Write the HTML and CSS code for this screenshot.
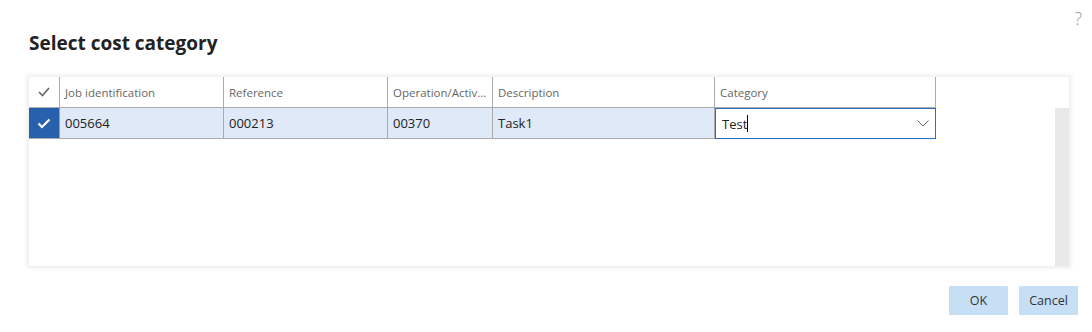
FILE: index.html
```html
<!DOCTYPE html>
<html lang="en">

<head>
    <meta charset="UTF-8">
    <title>Select cost category</title>
    <link rel="stylesheet" href="styles.css">
</head>

<body>
<div class="dialog">
    <div class="topbar">
        <span class="help">?</span>
    </div>

    <h1 class="title">Select cost category</h1>

    <!-- Grid with one selected line -->
    <div class="card">
        <div class="grid-area">
            <div class="grid">
                <div class="cell head check-cell">
                    <svg width="12" height="10" viewBox="0 0 12 10"><polyline points="1,5 4.5,8.5 11,1" fill="none" stroke="#666" stroke-width="1.6"/></svg>
                </div>
                <div class="cell head">Job identification</div>
                <div class="cell head">Reference</div>
                <div class="cell head">Operation/Activ...</div>
                <div class="cell head">Description</div>
                <div class="cell head">Category</div>

                <div class="cell row check-cell selected">
                    <svg width="14" height="11" viewBox="0 0 14 11"><polyline points="1.5,5.5 5,9 12.5,1.5" fill="none" stroke="#fff" stroke-width="2.2"/></svg>
                </div>
                <div class="cell row">005664</div>
                <div class="cell row">000213</div>
                <div class="cell row">00370</div>
                <div class="cell row">Task1</div>
                <div class="cell row edit">
                    <span class="value">Test<span class="caret"></span></span>
                    <svg class="chevron" width="12" height="7" viewBox="0 0 12 7"><polyline points="0.5,0.5 6,6 11.5,0.5" fill="none" stroke="#666" stroke-width="1"/></svg>
                </div>
            </div>
        </div>
        <div class="scroll"></div>
    </div>

    <div class="actions">
        <button class="btn">OK</button>
        <button class="btn">Cancel</button>
    </div>
</div>
</body>

</html>
```

FILE: styles.css
```css
* {
    box-sizing: border-box;
    margin: 0;
    padding: 0;
}

body {
    font-family: "Open Sans", Arial, sans-serif;
    background-color: #fff;
    color: #333;
}

.dialog {
    width: 1092px;
    height: 332px;
    padding: 0 14px 0 29px;
}

.topbar {
    height: 30px;
    display: flex;
    justify-content: flex-end;
    padding-top: 7px;
    margin-right: -4px;
}

.help {
    color: #9a9a9a;
    font-size: 18px;
    font-weight: 300;
    line-height: 22px;
}

.title {
    font-size: 19px;
    font-weight: 700;
    color: #222;
    line-height: 26px;
    height: 47px;
}

.card {
    width: 1040px;
    height: 189px;
    display: flex;
    background-color: #fff;
    box-shadow: 0 0 4px 2px rgba(0, 0, 0, 0.08);
}

.grid-area {
    flex: 1;
}

.grid {
    display: grid;
    grid-template-columns: 31px 164px 164px 105px 222px 221px;
}

.cell {
    height: 31px;
    border-right: 1px solid #ababab;
    border-bottom: 1px solid #ababab;
    padding-left: 5px;
    display: flex;
    align-items: center;
    white-space: nowrap;
    overflow: hidden;
}

.head {
    font-size: 11.5px;
    color: #666;
    background-color: #fff;
}

.row {
    font-size: 13px;
    color: #222;
    background-color: #dfe9f7;
}

.check-cell {
    justify-content: center;
    padding-left: 0;
}

.selected {
    background-color: #2761ad;
    border-right-color: #8aa0c0;
}

.edit {
    background-color: #fff;
    border: 1px solid #2b6cc4;
    justify-content: space-between;
    padding: 0 6px 0 6px;
}

.value {
    display: flex;
    align-items: center;
}

.caret {
    display: inline-block;
    width: 1px;
    height: 17px;
    background-color: #000;
}

.scroll {
    width: 14px;
    margin-top: 31px;
    background-color: #e9e9e9;
}

.actions {
    display: flex;
    justify-content: flex-end;
    gap: 11px;
    margin-top: 20px;
}

.btn {
    width: 59px;
    height: 29px;
    border: none;
    border-radius: 1px;
    background-color: #c7dff4;
    color: #333;
    font-family: inherit;
    font-size: 12.5px;
}
```
